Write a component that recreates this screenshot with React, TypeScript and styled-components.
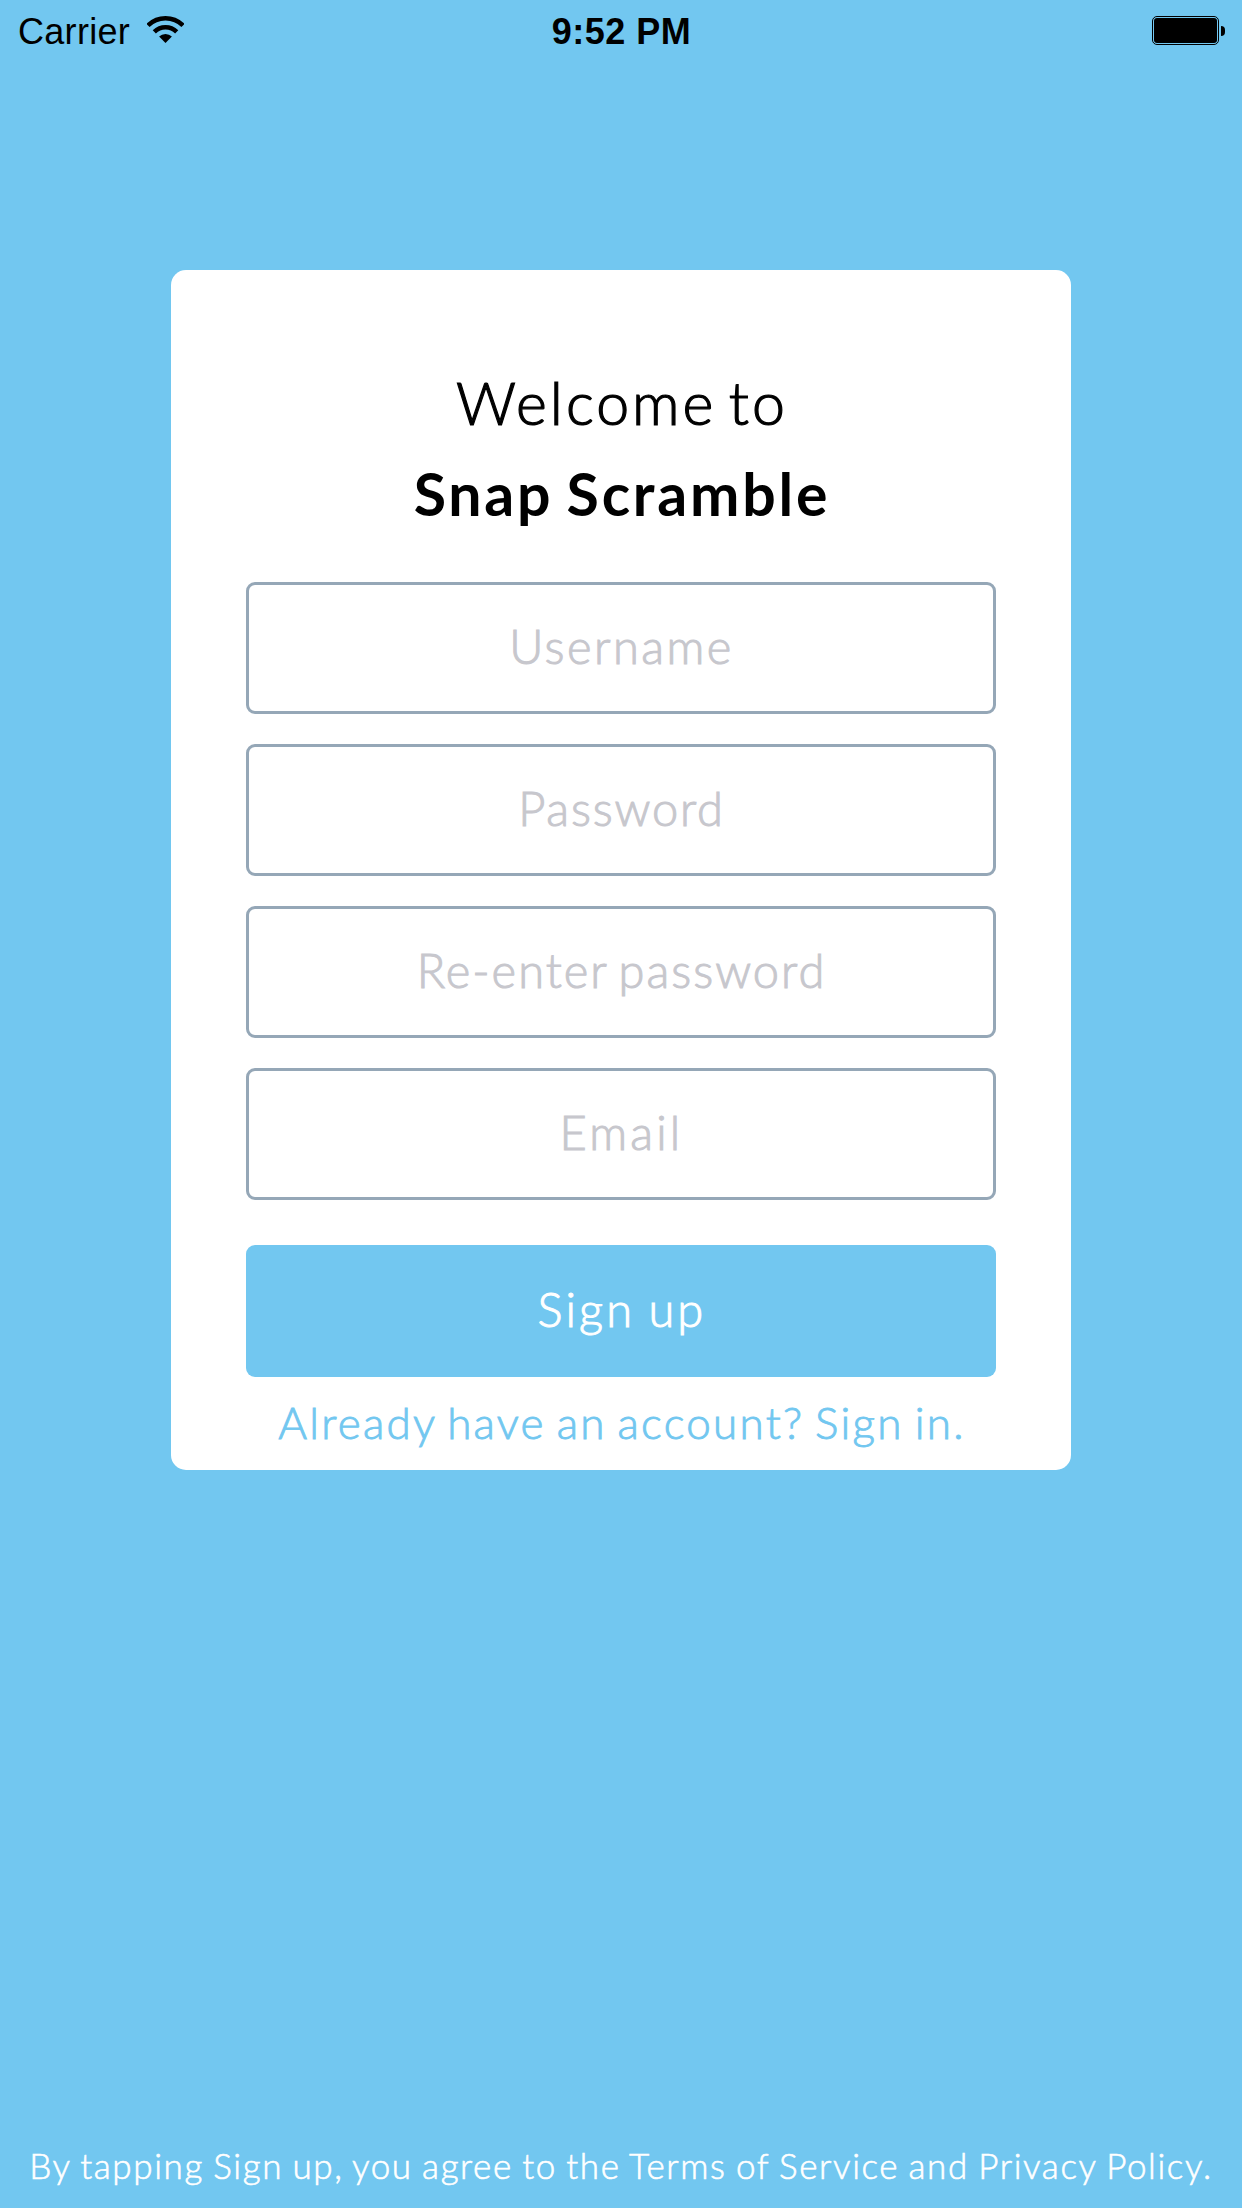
import React from "react";
import styled, { createGlobalStyle } from "styled-components";

const sky = "#72c7f0";

const GlobalStyle = createGlobalStyle`
  *, *::before, *::after { box-sizing: border-box; }
  body { margin: 0; background: ${sky}; }
`;

const Screen = styled.div`
  display: flex;
  flex-direction: column;
  align-items: center;
  width: 1242px;
  height: 2208px;
  background: ${sky};
  font-family: Lato, "Open Sans", sans-serif;
  font-weight: 300;
`;

const StatusBar = styled.header`
  display: grid;
  grid-template-columns: 1fr auto 1fr;
  width: 100%;
  height: 63px;
  padding: 0 17px 0 18px;
  font: 400 36px/63px "Liberation Sans", Arial, sans-serif;
  color: #000;
`;

const Carrier = styled.div`
  display: flex;
  gap: 17px;
  letter-spacing: 0.3px;

  svg { margin-top: 16px; }
`;

const Clock = styled.time`
  font-weight: 700;
  letter-spacing: 0.5px;
`;

const Battery = styled.div`
  display: flex;
  justify-self: end;
  gap: 2px;
  margin-top: 16px;
`;

const BatteryShell = styled.div`
  width: 67px;
  height: 29px;
  padding: 1px;
  border: 1px solid #000;
  border-radius: 5px;
`;

const BatteryCharge = styled.div`
  height: 100%;
  border-radius: 3px;
  background: #000;
`;

const BatteryTip = styled.div`
  width: 4px;
  height: 10px;
  margin-top: 10px;
  border-radius: 0 4px 4px 0;
  background: #000;
`;

const Card = styled.form`
  display: flex;
  flex-direction: column;
  width: 900px;
  height: 1200px;
  margin-top: 207px;
  padding: 87px 75px 0;
  border-radius: 15px;
  background: #fff;
`;

const Title = styled.h1`
  margin: 0 0 43px;
  font-size: 59px;
  line-height: 91px;
  font-weight: 300;
  text-align: center;
  color: #000;
`;

const Greeting = styled.span`
  display: block;
  padding-left: 2px;
  letter-spacing: 3px;
  word-spacing: -6.5px;
  -webkit-text-stroke: 1.2px currentColor;
`;

const AppName = styled.strong`
  display: block;
  padding-left: 2px;
  font-weight: 700;
  letter-spacing: 2.8px;
  word-spacing: -4px;
`;

const Fields = styled.div`
  display: flex;
  flex-direction: column;
  gap: 30px;
`;

const Field = styled.input<{ $tracking: number }>`
  width: 100%;
  height: 132px;
  padding: 0 0 4px 1px;
  border: 3px solid #95a7b7;
  border-radius: 9px;
  outline: none;
  background: #fff;
  font: 300 47px Lato, "Open Sans", sans-serif;
  letter-spacing: ${(p) => p.$tracking}px;
  word-spacing: -4px;
  text-align: center;
  -webkit-text-stroke: 1px currentColor;

  &::placeholder {
    color: #c7c7cd;
    opacity: 1;
  }
`;

const SubmitButton = styled.button`
  height: 132px;
  margin-top: 45px;
  padding: 0 0 4px 2px;
  border: 0;
  border-radius: 9px;
  background: ${sky};
  font: 300 47px Lato, "Open Sans", sans-serif;
  letter-spacing: 3.1px;
  word-spacing: -2.5px;
  color: #fff;
  -webkit-text-stroke: 1px currentColor;
`;

const SignInLink = styled.a`
  margin-top: 18px;
  padding-left: 2px;
  font-size: 44px;
  line-height: 54px;
  letter-spacing: 2.25px;
  word-spacing: -3.3px;
  text-align: center;
  white-space: nowrap;
  color: ${sky};
  -webkit-text-stroke: 0.9px currentColor;
`;

const Terms = styled.footer`
  margin-top: auto;
  padding-bottom: 22px;
  font-size: 35px;
  line-height: 42px;
  letter-spacing: 1.6px;
  word-spacing: -1.7px;
  white-space: nowrap;
  color: #fff;
  -webkit-text-stroke: 0.6px currentColor;
`;

const fields = [
  { label: "Username", type: "text", tracking: 2.45 },
  { label: "Password", type: "password", tracking: 1.8 },
  { label: "Re-enter password", type: "password", tracking: 2 },
  { label: "Email", type: "email", tracking: 3.2 },
];

function WifiIcon() {
  return (
    <svg width="37" height="27" viewBox="0 0 37 27" fill="none" stroke="#000" strokeWidth="4.5">
      <path d="M1 9.5A24.8 24.8 0 0 1 36 9.5" />
      <path d="M7.3 15.8A15.9 15.9 0 0 1 29.7 15.8" />
      <path d="M18.5 27L12.1 20.6A9 9 0 0 1 24.9 20.6Z" fill="#000" stroke="none" />
    </svg>
  );
}

export default function App() {
  return (
    <Screen>
      <GlobalStyle />
      <StatusBar>
        <Carrier>
          <span>Carrier</span>
          <WifiIcon />
        </Carrier>
        <Clock>9:52 PM</Clock>
        <Battery>
          <BatteryShell>
            <BatteryCharge />
          </BatteryShell>
          <BatteryTip />
        </Battery>
      </StatusBar>
      <Card>
        <Title>
          <Greeting>Welcome to</Greeting>
          <AppName>Snap Scramble</AppName>
        </Title>
        <Fields>
          {fields.map((f) => (
            <Field key={f.label} type={f.type} placeholder={f.label} $tracking={f.tracking} />
          ))}
        </Fields>
        <SubmitButton type="button">Sign up</SubmitButton>
        <SignInLink>Already have an account? Sign in.</SignInLink>
      </Card>
      <Terms>By tapping Sign up, you agree to the Terms of Service and Privacy Policy.</Terms>
    </Screen>
  );
}
